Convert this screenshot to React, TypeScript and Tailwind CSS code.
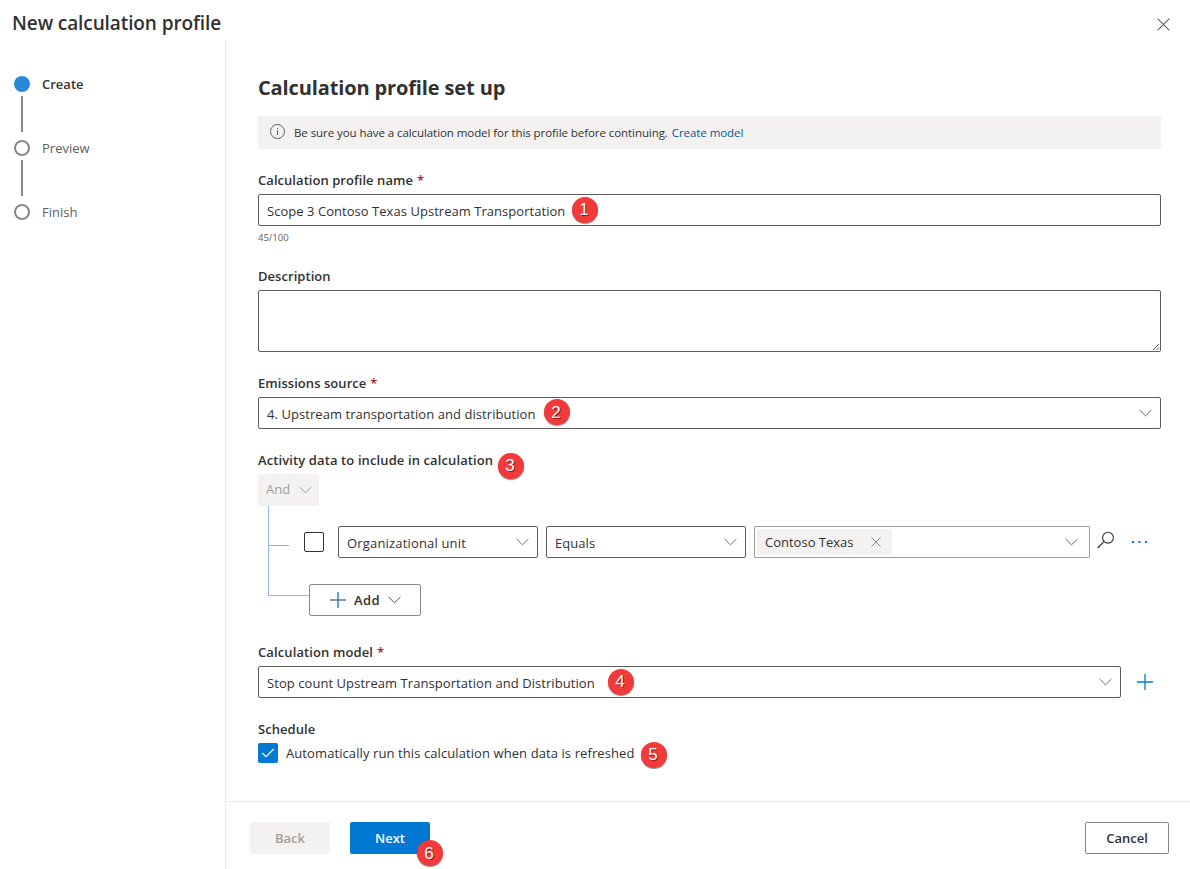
import type { ReactNode } from "react";
import clsx from "clsx";

function Chevron({ className = "text-[#605e5c]" }: { className?: string }) {
  return (
    <svg width="13" height="8" viewBox="0 0 13 8" fill="none" className={clsx("shrink-0", className)}>
      <path d="M.6 1 6.5 6.8 12.4 1" stroke="currentColor" strokeWidth="1" />
    </svg>
  );
}

function Cross({ size, className }: { size: number; className: string }) {
  return (
    <svg width={size} height={size} viewBox="0 0 13 13" fill="none" className={clsx("shrink-0", className)}>
      <path d="M.6.6 12.4 12.4M12.4.6.6 12.4" stroke="currentColor" strokeWidth="1.1" />
    </svg>
  );
}

function Badge({ n, className }: { n: number; className: string }) {
  return (
    <span
      className={clsx(
        "absolute z-10 flex size-[26px] items-center justify-center rounded-full bg-[#f23a3a] pr-px font-['Liberation_Sans'] text-[17px] leading-none tracking-normal text-white shadow-[0_1px_1px_rgba(0,0,0,0.45)] [text-shadow:1px_1px_0_rgba(90,0,0,0.6)]",
        className,
      )}
    >
      {n}
    </span>
  );
}

function Label({ children, required, className }: { children: ReactNode; required?: boolean; className?: string }) {
  return (
    <div
      className={clsx(
        "flex h-5 items-center whitespace-nowrap text-[13px] font-semibold leading-5 tracking-[0.05px]",
        className,
      )}
    >
      {children}
      {required && <span className="ml-1 text-[#a4262c]">*</span>}
    </div>
  );
}

function Select({ children, className }: { children: ReactNode; className: string }) {
  return (
    <div
      className={clsx(
        "relative flex h-8 items-center justify-between whitespace-nowrap rounded-[2px] border border-[#605e5c] pl-2 pr-2 text-[13px] tracking-[0.06px]",
        className,
      )}
    >
      {children}
      <Chevron className="-mt-px text-[#706e6c]" />
    </div>
  );
}

function Step({ label, active }: { label: string; active?: boolean }) {
  return (
    <li className="flex h-4 items-center gap-3">
      <span className={clsx("size-4 rounded-full", active ? "bg-[#2b88d8]" : "border-2 border-[#8a8886]")} />
      <span className={clsx("text-[13px] leading-4", active ? "font-semibold text-[#323130]" : "text-[#605e5c]")}>
        {label}
      </span>
    </li>
  );
}

function StepLine() {
  return <li className="mb-2 ml-[7px] mt-1 h-9 w-[2px] bg-[#8a8886]" />;
}

export default function App() {
  return (
    <div className="flex h-[869px] w-[1190px] flex-col overflow-hidden bg-white font-['Open_Sans','Noto_Sans',sans-serif] text-[#323130]">
      <header className="flex h-10 items-center justify-between pl-3 pr-5 pt-[7px]">
        <h1 className="text-[19px] font-semibold tracking-[-0.1px]">New calculation profile</h1>
        <Cross size={13} className="mt-px text-[#605e5c]" />
      </header>

      <div className="flex flex-1">
        <nav className="w-[226px] border-r border-[#edebe9] pl-[14px] pt-9">
          <ol>
            <Step label="Create" active />
            <StepLine />
            <Step label="Preview" />
            <StepLine />
            <Step label="Finish" />
          </ol>
        </nav>

        <div className="flex flex-1 flex-col">
          <main className="h-[761px] pl-8 pr-[29px] pt-8">
            <h2 className="h-8 text-[20px] font-bold leading-8 tracking-[-0.13px]">Calculation profile set up</h2>

            <div className="mt-3 flex h-[33px] items-center bg-[#f3f2f1] pl-3 text-[11.5px] tracking-[-0.07px]">
              <svg width="15" height="15" viewBox="0 0 15 15" fill="none" className="-mt-[2px] text-[#605e5c]">
                <circle cx="7.5" cy="7.5" r="7" stroke="currentColor" />
                <path d="M7.5 6.3V11M7.5 4v1.2" stroke="currentColor" />
              </svg>
              <span className="ml-[9px]">Be sure you have a calculation model for this profile before continuing.</span>
              <a className="ml-1 text-[#005a9e]">Create model</a>
            </div>

            <Label required className="mt-[21px]">Calculation profile name</Label>
            <div className="relative mt-1 flex h-8 items-center rounded-[2px] border border-[#605e5c] pl-2 text-[13px] tracking-[0.04px]">
              <span className="pt-[3px]">Scope 3 Contoso Texas Upstream Transportation</span>
              <Badge n={1} className="left-[312.5px] top-[1.5px]" />
            </div>
            <div className="mt-1 h-4 text-[9.5px] leading-4 text-[#605e5c]">45/100</div>

            <Label className="mt-5">Description</Label>
            <div className="mt-1 flex h-[62px] items-end justify-end rounded-[2px] border border-[#605e5c]">
              <svg width="8" height="8" viewBox="0 0 8 8" fill="none">
                <path d="M1 7 7 1M4.5 7 7 4.5" stroke="#605e5c" strokeWidth="1" />
              </svg>
            </div>

            <Label required className="mt-[21px]">Emissions source</Label>
            <Select className="mt-1">
              <span className="pt-[3px]">4. Upstream transportation and distribution</span>
              <Badge n={2} className="left-[284.5px] top-[1px]" />
            </Select>

            <div className="relative mt-[21px]">
              <Label className="tracking-[0.11px]">Activity data to include in calculation</Label>
              <Badge n={3} className="left-[239.5px] top-[2.5px]" />
            </div>
            <div className="mt-1 flex h-8 w-[61px] items-center gap-[7px] rounded-[2px] bg-[#f3f2f1] pl-2 text-[13px] text-[#a19f9d]">
              <span className="w-[26px]">And</span>
              <Chevron className="text-[#a19f9d]" />
            </div>

            <div className="flex pl-[10px]">
              <div className="w-[41px]">
                <div className="h-10 w-[21px] border-b border-l border-[#8fb3f5]" />
                <div className="h-[50px] border-b border-l border-[#8fb3f5]" />
              </div>
              <div className="-ml-[5px] pt-5">
                <div className="flex h-8 items-center">
                  <span className="mr-[14px] size-5 rounded-[2px] border border-[#323130]" />
                  <Select className="mr-2 w-[200px]">
                    <span className="pt-[3px] tracking-[0.17px]">Organizational unit</span>
                  </Select>
                  <Select className="mr-2 w-[200px]">
                    <span className="pt-[3px]">Equals</span>
                  </Select>
                  <div className="flex h-8 w-[336px] items-center justify-between rounded-[1px] border border-[#a19f9d] pl-[2px] pr-[11px] text-[13px]">
                    <span className="flex h-[26px] w-[135px] items-center justify-between rounded-[2px] bg-[#f3f2f1] pl-2 pr-[11px]">
                      <span className="pt-[2px]">Contoso Texas</span>
                      <Cross size={10} className="text-[#797775]" />
                    </span>
                    <Chevron className="text-[#605e5c]" />
                  </div>
                  <svg width="18" height="18" viewBox="0 0 18 18" fill="none" className="-mt-[4px] ml-[7px] text-[#323130]">
                    <circle cx="11" cy="6.7" r="5.4" stroke="currentColor" strokeWidth="1.1" />
                    <path d="M7 10.6.6 17" stroke="currentColor" strokeWidth="1.2" />
                  </svg>
                  <svg width="16" height="2" viewBox="0 0 16 2" className="ml-[17px] text-[#0078d4]">
                    <path d="M0 0h2v2H0zM6.5 0h2v2h-2zM13 0h2v2h-2z" fill="currentColor" />
                  </svg>
                </div>
                <div className="ml-[5px] mt-[26px] flex h-8 w-[112px] items-center rounded-[2px] border border-[#8a8886] pl-5 text-[13px] font-semibold">
                  <svg width="16" height="16" viewBox="0 0 16 16" fill="none">
                    <path d="M0 8h16" stroke="#605e5c" strokeWidth="1.3" />
                    <path d="M8 0v16" stroke="#0078d4" strokeWidth="1.3" />
                  </svg>
                  <span className="ml-2 w-[27px] pt-[2px] tracking-[0.4px]">Add</span>
                  <Chevron className="ml-[7px] text-[#444a6c]" />
                </div>
              </div>
            </div>

            <Label required className="mt-[26px] tracking-[0.11px]">Calculation model</Label>
            <div className="mt-1 flex items-center">
              <Select className="w-[863px]">
                <span className="pt-[3px]">Stop count Upstream Transportation and Distribution</span>
                <Badge n={4} className="left-[348.5px] top-[1.5px]" />
              </Select>
              <svg width="16" height="16" viewBox="0 0 16 16" fill="none" className="ml-4 text-[#0078d4]">
                <path d="M0 8h16M8 0v16" stroke="currentColor" strokeWidth="1.3" />
              </svg>
            </div>

            <Label className="mt-[21px]">Schedule</Label>
            <div className="relative mt-1 flex h-5 items-center gap-2 text-[13px]">
              <span className="flex size-5 items-center justify-center rounded-[2px] bg-[#0078d4]">
                <svg width="14" height="10" viewBox="0 0 14 10" fill="none">
                  <path d="M1.2 5 5 8.7 12.8 1" stroke="#fff" strokeWidth="1.1" />
                </svg>
              </span>
              <span className="pt-[2px] tracking-[0.09px]">Automatically run this calculation when data is refreshed</span>
              <Badge n={5} className="left-[382.5px] top-[-1.5px]" />
            </div>
          </main>

          <footer className="flex flex-1 items-start border-t border-[#edebe9] pl-6 pr-[21px] pt-5 text-[13px] font-semibold">
            <button className="h-8 w-20 rounded-[2px] bg-[#f3f2f1] pt-[2px] text-[#a19f9d]">Back</button>
            <div className="relative ml-5">
              <button className="h-8 w-20 rounded-[2px] bg-[#0078d4] pt-[2px] text-white">Next</button>
              <Badge n={6} className="left-[66.5px] top-[18px] font-normal" />
            </div>
            <button className="ml-auto h-8 w-[84px] rounded-[2px] border border-[#8a8886] pt-[2px]">Cancel</button>
          </footer>
        </div>
      </div>
    </div>
  );
}
